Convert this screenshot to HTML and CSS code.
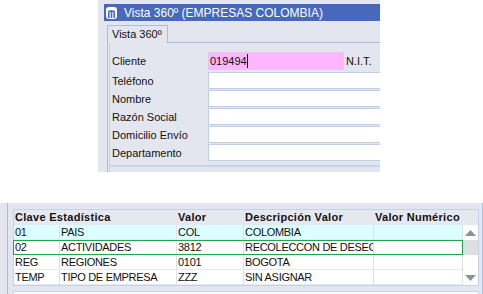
FILE: index.html
```html
<!DOCTYPE html>
<html lang="es">
<head>
<meta charset="utf-8">
<title>Vista 360º</title>
<link rel="stylesheet" href="styles.css">
</head>
<body>
<div class="win">
  <div class="titlebar">
    <svg class="appicon" width="11" height="12" viewBox="0 0 11 12">
      <rect x="0" y="0" width="11" height="12" rx="3" fill="#fff"/>
      <rect x="2" y="5" width="1.6" height="6" fill="#4869bb"/>
      <rect x="4.7" y="3" width="1.6" height="8" fill="#4869bb"/>
      <rect x="7.4" y="5" width="1.6" height="6" fill="#4869bb"/>
      <rect x="2" y="3.5" width="7" height="1.4" rx="0.7" fill="#4869bb"/>
    </svg>
    <span class="title">Vista 360º (EMPRESAS COLOMBIA)</span>
  </div>
  <div class="tabs">
    <div class="tab">Vista 360º</div>
    <div class="tabline"></div>
  </div>
  <div class="panel">
    <div class="group">
      <div class="row first">
        <span class="lbl">Cliente</span>
        <span class="inp pink">019494<span class="caret"></span></span>
        <span class="nit">N.I.T.</span>
      </div>
      <div class="row"><span class="lbl">Teléfono</span><span class="inp wide"></span></div>
      <div class="row"><span class="lbl">Nombre</span><span class="inp wide"></span></div>
      <div class="row"><span class="lbl">Razón Social</span><span class="inp wide"></span></div>
      <div class="row"><span class="lbl">Domicilio Envío</span><span class="inp wide"></span></div>
      <div class="row"><span class="lbl">Departamento</span><span class="inp wide"></span></div>
    </div>
    <div class="group2">
      <div class="row"><span class="lbl"></span><span class="inp short"></span></div>
    </div>
  </div>
</div>

<div class="shot">
  <div class="outer">
    <div class="frame">
      <div class="thead">
        <div class="th c12">Clave Estadística</div>
        <div class="th c3">Valor</div>
        <div class="th c4">Descripción Valor</div>
        <div class="th c5">Valor Numérico</div>
      </div>
      <div class="tbody">
        <div class="rows">
          <div class="tr cyan"><div class="td c1">01</div><div class="td c2">PAIS</div><div class="td c3">COL</div><div class="td c4">COLOMBIA</div><div class="td c5"></div></div>
          <div class="tr sel"><div class="td c1">02</div><div class="td c2">ACTIVIDADES</div><div class="td c3">3812</div><div class="td c4">RECOLECCON DE DESECHOS</div><div class="td c5"></div></div>
          <div class="tr"><div class="td c1">REG</div><div class="td c2">REGIONES</div><div class="td c3">0101</div><div class="td c4">BOGOTA</div><div class="td c5"></div></div>
          <div class="tr"><div class="td c1">TEMP</div><div class="td c2">TIPO DE EMPRESA</div><div class="td c3">ZZZ</div><div class="td c4">SIN ASIGNAR</div><div class="td c5"></div></div>
        </div>
        <div class="scroll">
          <div class="sbtn"><svg width="11" height="6" viewBox="0 0 11 6"><polygon points="0,6 11,6 5.5,0" fill="#8c9099"/></svg></div>
          <div class="thumb"></div>
          <div class="strack"></div>
          <div class="sbtn"><svg width="11" height="6" viewBox="0 0 11 6"><polygon points="0,0 11,0 5.5,6" fill="#8c9099"/></svg></div>
        </div>
      </div>
    </div>
    <div class="frame2"></div>
  </div>
</div>
</body>
</html>
```

FILE: styles.css
```css
html, body {
  margin: 0;
  padding: 0;
  background: #fff;
}
body {
  font-family: "Liberation Sans", Arial, sans-serif;
  font-size: 11px;
  color: #111;
}

/* ---------- top window ---------- */
.win {
  margin-left: 98px;
  width: 282px;
  height: 172px;
  background: #e3e6ee;
  overflow: hidden;
}
.titlebar {
  margin: 4px 0 0 6px;
  height: 17px;
  background: #4869bb;
  display: flex;
  align-items: center;
  color: #fff;
  white-space: nowrap;
}
.appicon {
  margin-left: 2px;
  flex: none;
}
.title {
  margin-left: 7px;
  font-size: 12px;
}
.tabs {
  margin: 4px 0 0 9px;
  display: flex;
  height: 18px;
}
.tab {
  border: 1px solid #a9bedb;
  border-bottom: none;
  padding-left: 4px;
  line-height: 16px;
  font-size: 11px;
  box-sizing: border-box;
  width: 61px;
}
.tabline {
  flex: 1;
  border-bottom: 1px solid #a9bedb;
}
.panel {
  margin-left: 9px;
  border-left: 1px solid #a9bedb;
  padding-left: 1px;
  height: 200px;
}
.group {
  border-left: 1px solid #c6d4e8;
  border-bottom: 2px solid #c6d4e8;
  padding: 9px 0 4px 0;
  display: flex;
  flex-direction: column;
  gap: 1px;
}
.group2 {
  border-left: 1px solid #c6d4e8;
  padding-top: 5px;
}
.row {
  display: flex;
  align-items: center;
  height: 17px;
  white-space: nowrap;
}
.row.first {
  height: 18px;
  margin-bottom: 1px;
}
.lbl {
  width: 96px;
  padding-left: 2px;
  flex: none;
}
.inp {
  height: 100%;
  box-sizing: border-box;
  background: #fff;
  border: 1px solid #bfd0e6;
  display: flex;
  align-items: center;
  padding-left: 1px;
}
.inp.wide {
  width: 200px;
  flex: none;
}
.inp.short {
  width: 135px;
  flex: none;
}
.inp.pink {
  width: 136px;
  flex: none;
  background: #ffb5ff;
  border-color: #e3c6ee;
}
.caret {
  display: inline-block;
  width: 1px;
  height: 14px;
  background: #000;
}
.nit {
  margin-left: 2px;
}

/* ---------- bottom grid ---------- */
.shot {
  margin-top: 31px;
  height: 91px;
  background: #e3e6ee;
  padding-left: 7px;
  overflow: hidden;
}
.outer {
  height: 100%;
  border-left: 1px solid #a9bedb;
  border-right: 1px solid #a9bedb;
  padding: 6px 3px 0 5px;
}
.frame {
  border: 1px solid #c3d2e7;
  background: #fff;
}
.thead {
  display: flex;
  height: 15px;
  background: #e6e8ef;
  font-weight: bold;
  white-space: nowrap;
  line-height: 15px;
  letter-spacing: 0.3px;
}
.th {
  padding-left: 1px;
  box-sizing: border-box;
  overflow: hidden;
}
.c1 { width: 46px; }
.c2 { width: 117px; }
.c12 { width: 163px; }
.c3 { width: 67px; }
.c4 { width: 130px; }
.c5 { width: 89px; }
.tbody {
  display: flex;
}
.rows {
  width: 449px;
}
.tr {
  display: flex;
  height: 15px;
  line-height: 14px;
  white-space: nowrap;
  position: relative;
  letter-spacing: -0.3px;
}
.tr.cyan {
  background: #dcffff;
}
.tr.sel::after {
  content: "";
  position: absolute;
  inset: 0 0 0 -1px;
  border: 1px solid #1fa64a;
}
.td {
  box-sizing: border-box;
  padding-left: 1px;
  border-right: 1px solid #dde1e8;
  border-bottom: 1px solid #e7e9ee;
  overflow: hidden;
}
.scroll {
  width: 15px;
  display: flex;
  flex-direction: column;
  background: #fff;
}
.sbtn {
  height: 15px;
  display: flex;
  align-items: center;
  justify-content: center;
}
.thumb {
  height: 15px;
  background: #dedfe2;
}
.strack {
  height: 15px;
}
.frame2 {
  margin-top: 5px;
  height: 10px;
  border: 1px solid #c3d2e7;
  background: #fff;
}
```
